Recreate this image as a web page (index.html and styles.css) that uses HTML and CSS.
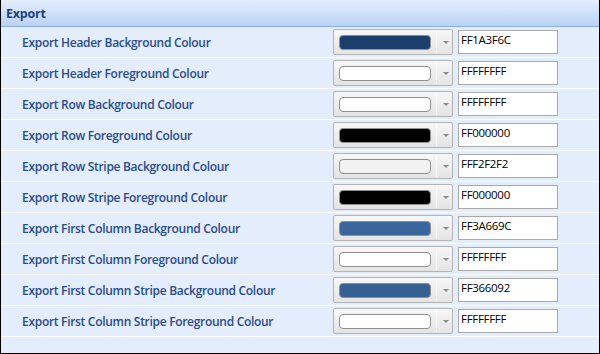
FILE: index.html
```html
<!DOCTYPE html>
<html lang="en">
<head>
    <meta charset="UTF-8">
    <title>Export Settings</title>
    <link rel="stylesheet" href="styles.css">
</head>
<body>

    <div class="panel">
        <div class="panel-header">Export</div>

        <div class="row">
            <span class="label">Export Header Background Colour</span>
            <div class="combo"><span class="swatch" style="background:#1A3F6C"></span><span class="drop"></span></div>
            <input class="hex" type="text" value="FF1A3F6C">
        </div>
        <div class="row">
            <span class="label">Export Header Foreground Colour</span>
            <div class="combo"><span class="swatch" style="background:#FFFFFF"></span><span class="drop"></span></div>
            <input class="hex" type="text" value="FFFFFFFF">
        </div>
        <div class="row">
            <span class="label">Export Row Background Colour</span>
            <div class="combo"><span class="swatch" style="background:#FFFFFF"></span><span class="drop"></span></div>
            <input class="hex" type="text" value="FFFFFFFF">
        </div>
        <div class="row">
            <span class="label">Export Row Foreground Colour</span>
            <div class="combo"><span class="swatch" style="background:#000000"></span><span class="drop"></span></div>
            <input class="hex" type="text" value="FF000000">
        </div>
        <div class="row">
            <span class="label">Export Row Stripe Background Colour</span>
            <div class="combo"><span class="swatch" style="background:#F2F2F2"></span><span class="drop"></span></div>
            <input class="hex" type="text" value="FFF2F2F2">
        </div>
        <div class="row">
            <span class="label">Export Row Stripe Foreground Colour</span>
            <div class="combo"><span class="swatch" style="background:#000000"></span><span class="drop"></span></div>
            <input class="hex" type="text" value="FF000000">
        </div>
        <div class="row">
            <span class="label">Export First Column Background Colour</span>
            <div class="combo"><span class="swatch" style="background:#3A669C"></span><span class="drop"></span></div>
            <input class="hex" type="text" value="FF3A669C">
        </div>
        <div class="row">
            <span class="label">Export First Column Foreground Colour</span>
            <div class="combo"><span class="swatch" style="background:#FFFFFF"></span><span class="drop"></span></div>
            <input class="hex" type="text" value="FFFFFFFF">
        </div>
        <div class="row">
            <span class="label">Export First Column Stripe Background Colour</span>
            <div class="combo"><span class="swatch" style="background:#366092"></span><span class="drop"></span></div>
            <input class="hex" type="text" value="FF366092">
        </div>
        <div class="row">
            <span class="label">Export First Column Stripe Foreground Colour</span>
            <div class="combo"><span class="swatch" style="background:#FFFFFF"></span><span class="drop"></span></div>
            <input class="hex" type="text" value="FFFFFFFF">
        </div>
    </div>

</body>
</html>
```

FILE: styles.css
```css
body {
    margin: 0;
    padding: 0;
    font-family: "Open Sans", "Noto Sans", sans-serif;
}

.panel {
    width: 600px;
    height: 354px;
    box-sizing: border-box;
    border: 1px solid #000;
    border-top: 0;
    background-color: #e3edfb;
}

.panel-header {
    height: 26px;
    line-height: 27px;
    padding-left: 5px;
    border-bottom: 1px solid #8db0e2;
    background: linear-gradient(to bottom, #e4eefc, #b9d2f4);
    color: #1e3f7e;
    font-size: 12.5px;
    font-weight: 700;
    letter-spacing: -0.2px;
}

.row {
    display: flex;
    align-items: center;
    height: 30px;
    padding-left: 21px;
    border-bottom: 1px solid #fff;
}

.label {
    flex: 0 0 311px;
    color: #2a4b8c;
    font-size: 12px;
    font-weight: 600;
    letter-spacing: -0.3px;
}

.combo {
    display: flex;
    align-items: center;
    width: 120px;
    height: 26px;
    box-sizing: border-box;
    padding-left: 5px;
    border: 1px solid #b4b4b4;
    border-radius: 2px;
    background: linear-gradient(to bottom, #f7f7f7, #e4e4e4);
}

.swatch {
    width: 92px;
    height: 15px;
    box-sizing: border-box;
    border: 1px solid #8f8f8f;
    border-radius: 4px;
}

.drop {
    position: relative;
    flex: 1;
    height: 22px;
    margin-left: 5px;
    border-left: 1px solid #fdfdfd;
}

.drop::after {
    content: "";
    position: absolute;
    left: 6px;
    top: 10px;
    border-left: 3px solid transparent;
    border-right: 3px solid transparent;
    border-top: 3px solid #8a8a8a;
}

.hex {
    width: 100px;
    height: 24px;
    box-sizing: border-box;
    margin: 0 0 0 5px;
    padding: 0 2px 6px;
    border: 1px solid #a9a9a9;
    background: #fff;
    color: #000;
    font-family: "Open Sans", "Noto Sans", sans-serif;
    font-size: 11.5px;
    letter-spacing: -0.3px;
    outline: none;
}
```
